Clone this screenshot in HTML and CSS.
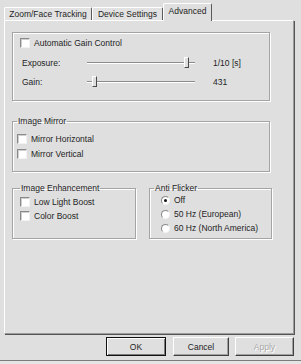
FILE: index.html
```html
<!DOCTYPE html>
<html lang="en">
<head>
  <meta charset="UTF-8" />
  <title>Camera Properties</title>
  <link rel="stylesheet" href="styles.css">
</head>
<body>
  <div class="dialog">
    <div class="tabs">
      <div class="tab tab-zoom">Zoom/Face Tracking</div>
      <div class="tab tab-device">Device Settings</div>
      <div class="tab tab-adv active">Advanced</div>
    </div>

    <div class="panel">
      <div class="group gain-box">
        <div class="check"><span class="box"></span>Automatic Gain Control</div>
        <div class="slider-row exposure">
          <span class="slider-label">Exposure:</span>
          <div class="slider"><span class="track"></span><span class="thumb" style="left: 97px"></span></div>
          <span class="value">1/10 [s]</span>
        </div>
        <div class="slider-row gain">
          <span class="slider-label">Gain:</span>
          <div class="slider"><span class="track"></span><span class="thumb" style="left: 5px"></span></div>
          <span class="value">431</span>
        </div>
      </div>

      <fieldset class="group mirror">
        <legend>Image Mirror</legend>
        <div class="check"><span class="box"></span>Mirror Horizontal</div>
        <div class="check"><span class="box"></span>Mirror Vertical</div>
      </fieldset>

      <div class="pair">
        <fieldset class="group enhance">
          <legend>Image Enhancement</legend>
          <div class="check"><span class="box"></span>Low Light Boost</div>
          <div class="check"><span class="box"></span>Color Boost</div>
        </fieldset>
        <fieldset class="group flicker">
          <legend>Anti Flicker</legend>
          <div class="radio"><span class="dot on"></span>Off</div>
          <div class="radio"><span class="dot"></span>50 Hz (European)</div>
          <div class="radio"><span class="dot"></span>60 Hz (North America)</div>
        </fieldset>
      </div>
    </div>

    <div class="buttons">
      <button class="btn default ok">OK</button>
      <button class="btn cancel">Cancel</button>
      <button class="btn apply" disabled>Apply</button>
    </div>
  </div>
</body>
</html>
```

FILE: styles.css
```css
:root {
  --bg: #dfdfdf;
  --text: #1e1e1e;
  --light: #ffffff;
  --edge: #a4a4a4;
  --dark: #5a5a5a;
}

* {
  box-sizing: border-box;
}

body {
  margin: 0;
  background: #e4e4e4;
  color: var(--text);
  font-family: "Liberation Sans", Arial, sans-serif;
  font-size: 8.5px;
}

.dialog {
  width: 301px;
  height: 361px;
  padding: 3px 7px 0 4px;
  background: var(--bg);
  border-bottom: 1px solid #7c7c7c;
}

/* tabs */
.tabs {
  display: flex;
  align-items: flex-end;
  height: 18px;
  margin-bottom: -1px;
  position: relative;
  z-index: 1;
}

.tab {
  height: 13px;
  margin-bottom: 1px;
  line-height: 12px;
  text-align: center;
  white-space: nowrap;
  background: #e2e2e2;
  border-top: 1px solid var(--light);
  border-left: 1px solid var(--light);
  border-right: 1px solid var(--dark);
  border-radius: 2px 2px 0 0;
}

.tab-zoom { width: 88px; }
.tab-device { width: 71px; }

.tab.active {
  width: 49px;
  height: 18px;
  margin-bottom: 0;
  line-height: 15px;
  background: var(--bg);
}

/* tab page */
.panel {
  width: 290px;
  height: 314px;
  padding: 11px 0 0 7px;
  border: 1px solid;
  border-color: var(--light) #9c9c9c #9c9c9c var(--light);
  box-shadow: 1px 1px 0 #555;
}

.group {
  margin: 0;
  border: 1px solid var(--edge);
  box-shadow: inset 1px 1px 0 var(--light), 1px 1px 0 var(--light);
}

.group legend {
  padding: 0 1px;
  line-height: 11px;
}

.gain-box {
  width: 258px;
  height: 69px;
  padding: 4px 0 0 7px;
}

.check,
.radio {
  display: flex;
  align-items: center;
  gap: 4px;
  white-space: nowrap;
}

.box {
  width: 10px;
  height: 10px;
  background: #fff;
  border: 1px solid;
  border-color: #8a8a8a #f2f2f2 #f2f2f2 #8a8a8a;
  box-shadow: inset 1px 1px 0 #cfcfcf;
}

.gain-box .check {
  height: 12px;
}

.slider-row {
  display: flex;
  align-items: center;
  height: 12px;
  padding-left: 2px;
}

.exposure { margin-top: 8px; }
.gain { margin-top: 7px; }

.slider-label {
  width: 65px;
}

.slider {
  position: relative;
  width: 108px;
  height: 12px;
}

.track {
  display: block;
  margin-top: 5px;
  height: 2px;
  border-top: 1px solid #8c8c8c;
  border-bottom: 1px solid var(--light);
}

.thumb {
  position: absolute;
  top: 0;
  width: 5px;
  height: 11px;
  background: var(--bg);
  border: 1px solid;
  border-color: var(--light) #4a4a4a #4a4a4a var(--light);
}

.value {
  margin-left: 18px;
}

.mirror {
  width: 258px;
  height: 56px;
  margin-top: 15px;
  padding: 4px 0 0 4px;
}

.mirror .check {
  height: 15px;
}

.pair {
  display: flex;
  margin-top: 11px;
}

.enhance {
  width: 124px;
  height: 56px;
  padding: 1px 0 0 7px;
}

.enhance .check {
  height: 14px;
}

.flicker {
  width: 123px;
  height: 56px;
  margin-left: 13px;
  padding: 0 0 0 4px;
}

.radio {
  height: 14px;
  padding-left: 7px;
}

.radio:first-of-type {
  margin-top: -1px;
}

.dot {
  display: flex;
  align-items: center;
  justify-content: center;
  width: 9px;
  height: 9px;
  border-radius: 50%;
  background: #fff;
  border: 1px solid;
  border-color: #8a8a8a #f2f2f2 #f2f2f2 #8a8a8a;
}

.dot.on::after {
  content: "";
  width: 3px;
  height: 3px;
  border-radius: 50%;
  background: #111;
}

/* dialog buttons */
.buttons {
  display: flex;
  justify-content: flex-end;
  gap: 7px;
  margin-top: 3px;
}

.btn {
  height: 19px;
  padding: 0;
  font: inherit;
  color: var(--text);
  background: var(--bg);
  border: 1px solid;
  border-color: var(--light) #404040 #404040 var(--light);
  box-shadow: inset -1px -1px 0 #a0a0a0;
}

.ok { width: 60px; }
.cancel { width: 56px; }
.apply { width: 59px; margin-left: -1px; }

.btn.default {
  border-color: #111;
  box-shadow: inset 1px 1px 0 var(--light), inset -1px -1px 0 #7a7a7a;
}

.btn:disabled {
  color: #a8a8a8;
  text-shadow: 1px 1px 0 var(--light);
}
```
